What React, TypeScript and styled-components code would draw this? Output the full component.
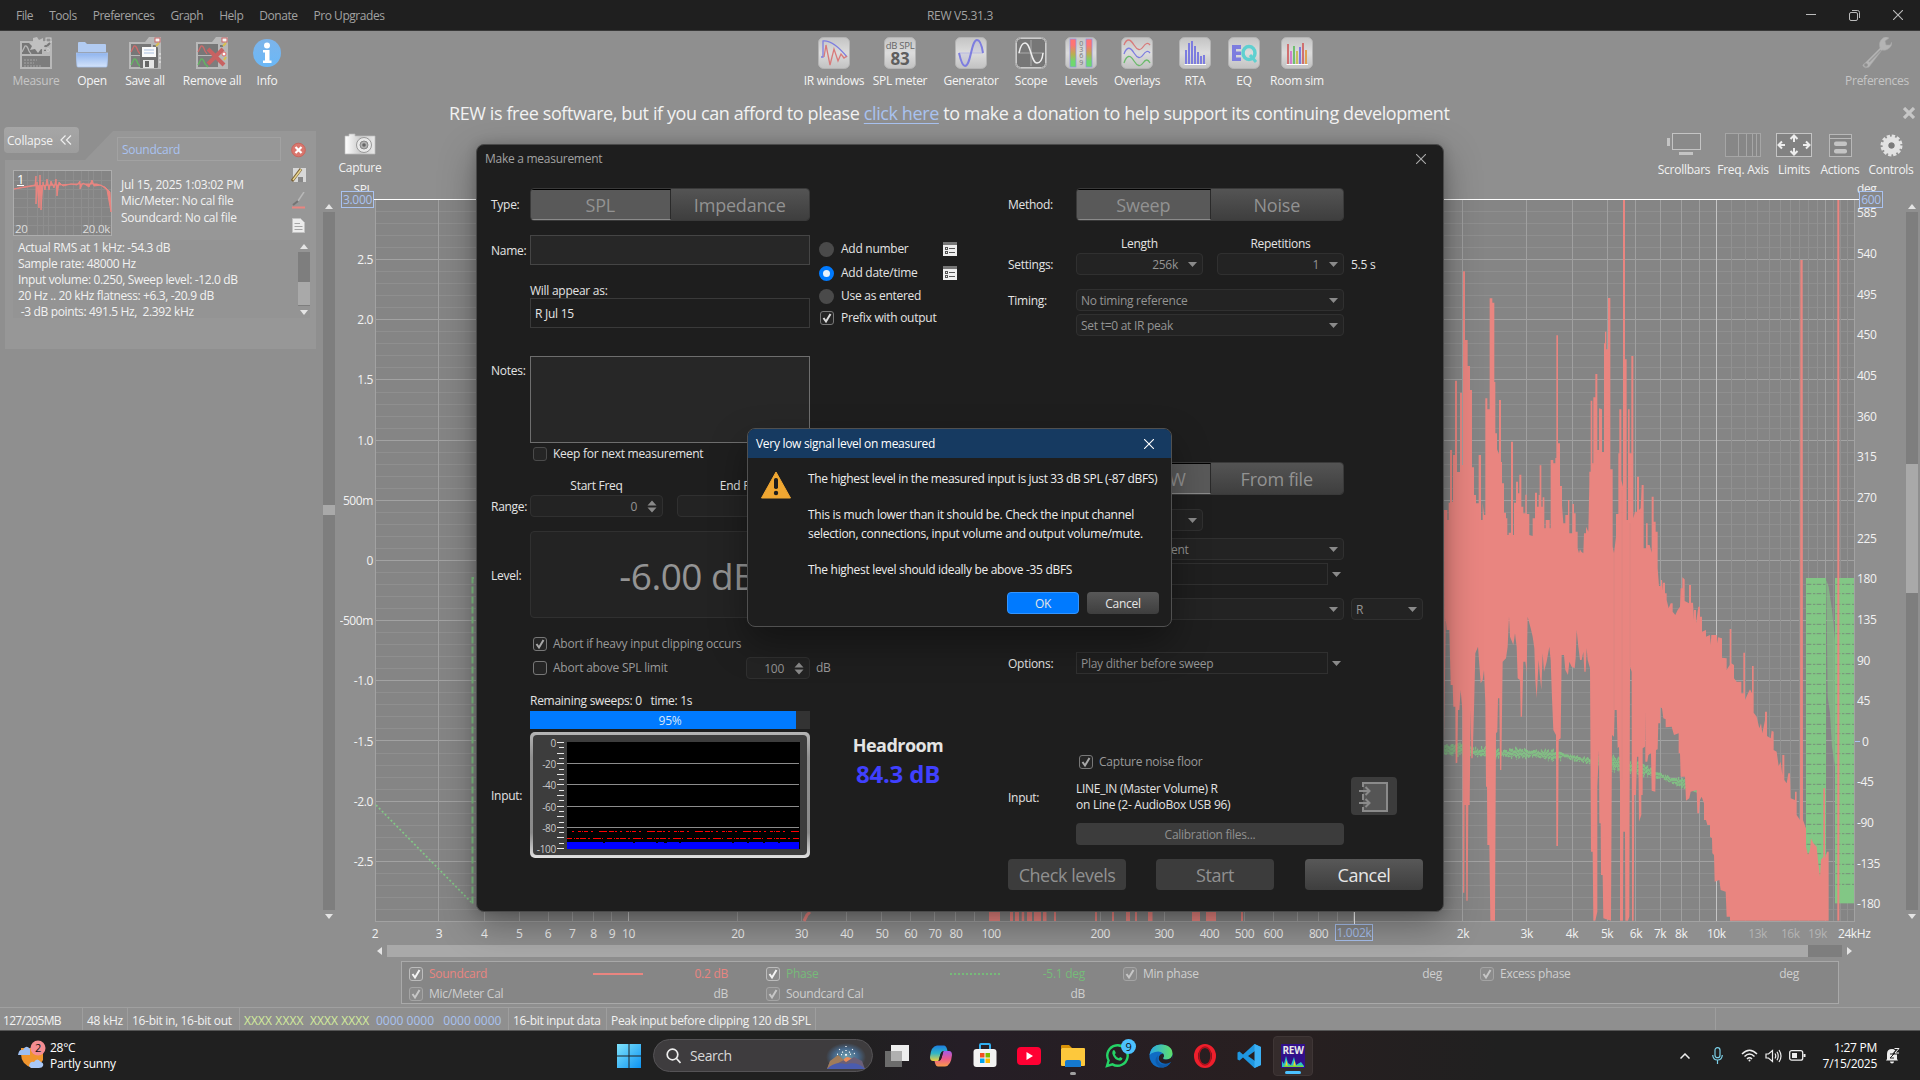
import React from "react";
import styled, { createGlobalStyle, css } from "styled-components";

const UI = `"Open Sans", "Noto Sans", sans-serif`;
const RED = "#e98580";
const GREEN = "#82c785";

const Global = createGlobalStyle`
  * { box-sizing: border-box; }
  html, body { margin: 0; padding: 0; background: #8f8f8f; overflow: hidden; }
  body { font-family: ${UI}; font-size: 12px; letter-spacing: -0.27px; color: #f2f2f2; line-height: 16px; }
  svg { display: block; flex: none; }
  svg text { font-family: ${UI}; }
`;

const Screen = styled.div`
  position: relative;
  width: 1920px;
  height: 1080px;
  display: flex;
  flex-direction: column;
  overflow: hidden;
`;

/* ---------- title bar ---------- */

const TitleBar = styled.header`
  height: 31px;
  flex: none;
  display: grid;
  grid-template-columns: 1fr auto 1fr;
  align-items: center;
  background: #1f1f1f;
  border-bottom: 1px solid #383838;
  color: #a2a2a2;
`;

const Menu = styled.nav`
  display: flex;
  gap: 16px;
  padding: 2px 0 0 16px;
  letter-spacing: -0.46px;
`;

const WindowTitle = styled.span`
  padding-top: 2px;
`;

const WindowButtons = styled.div`
  display: flex;
  justify-content: flex-end;
  align-items: center;
  gap: 33px;
  padding-right: 17px;
`;

/* ---------- toolbar ---------- */

const Toolbar = styled.div`
  height: 66px;
  flex: none;
  display: flex;
  padding-left: 6px;
`;

const Tool = styled.div<{ $w: number; $dim?: boolean }>`
  width: ${(p) => p.$w}px;
  padding-top: 6px;
  display: flex;
  flex-direction: column;
  align-items: center;
  gap: 4px;
  white-space: nowrap;
  color: ${(p) => (p.$dim ? "#c6c6c6" : "#f4f4f4")};
`;

const Spacer = styled.div<{ $w?: number }>`
  ${(p) => (p.$w ? `width: ${p.$w}px; flex: none;` : "flex: 1;")}
`;

const Banner = styled.div`
  height: 30px;
  flex: none;
  display: flex;
  align-items: center;
  padding: 1px 5px 0 449px;
  justify-content: space-between;
  font-size: 18px;
  letter-spacing: -0.4px;
  white-space: nowrap;
  line-height: 24px;
`;

const Link = styled.span`
  color: #a9c2f0;
  text-decoration: underline;
  text-underline-offset: 3px;
`;

/* ---------- main work area ---------- */

const Work = styled.main`
  flex: none;
  height: 880px;
  display: flex;
`;

const Side = styled.aside`
  width: 317px;
  flex: none;
`;

const SideCard = styled.section`
  width: 311px;
  height: 218px;
  margin: 4px 0 0 5px;
  display: flex;
  flex-direction: column;
  background: #979797;
  clip-path: polygon(0 29px, 80px 29px, 108px 0, 311px 0, 311px 218px, 0 218px);
`;

const Collapse = styled.button`
  position: absolute;
  left: 4px;
  top: 127px;
  width: 75px;
  height: 26px;
  padding: 0 7px 0 3px;
  display: flex;
  align-items: center;
  justify-content: space-between;
  border: 0;
  border-radius: 4px;
  background: linear-gradient(#a6a6a6, #9d9d9d);
  color: #f2f2f2;
  font: 12px ${UI};
  letter-spacing: -0.2px;
`;

const CardTop = styled.div`
  display: flex;
  padding: 6px 0 0 8px;
  height: 107px;
`;

const ThumbCol = styled.div`
  padding-top: 33px;
`;

const CardText = styled.div`
  width: 175px;
  padding-left: 5px;
`;

const NameBox = styled.div`
  height: 24px;
  width: 164px;
  padding: 4px 4px;
  border: 1px solid #a2a2a2;
  color: #a9c2f0;
  line-height: 15px;
`;

const Lines = styled.div<{ $pad?: string; $lh?: number; $ls?: number }>`
  padding: ${(p) => p.$pad || 0};
  line-height: ${(p) => p.$lh || 16}px;
  letter-spacing: ${(p) => p.$ls ?? -0.27}px;
  white-space: pre;
`;

const IconCol = styled.div`
  display: flex;
  flex-direction: column;
  align-items: center;
  gap: 8px;
  padding-top: 5px;
  width: 16px;
`;

const NotesBox = styled.div`
  width: 297px;
  height: 78px;
  margin: 2px 0 0 8px;
  display: flex;
  justify-content: space-between;
  background: #949494;
  overflow: hidden;
`;

/* ---------- scroll bars ---------- */

const VBar = styled.div<{ $h: number }>`
  width: 12px;
  height: ${(p) => p.$h}px;
  flex: none;
  display: flex;
  flex-direction: column;
  align-items: center;
`;

const ArrowCell = styled.div<{ $s: number }>`
  height: ${(p) => p.$s}px;
  display: flex;
  align-items: center;
`;

const Track = styled.div<{ $top: number }>`
  flex: 1;
  width: 12px;
  padding-top: ${(p) => p.$top}px;
  background: #7e7e7e;
`;

const Thumb = styled.div<{ $size: number }>`
  height: ${(p) => p.$size}px;
  background: #a9a9a9;
`;

const HBar = styled.div`
  display: flex;
  align-items: center;
  height: 12px;
  width: 1475px;
  margin-left: 37px;
  gap: 5px;
`;

const HTrack = styled.div`
  width: 1455px;
  height: 12px;
  background: #7e7e7e;
`;

const HThumb = styled.div`
  width: 1421px;
  height: 12px;
  background: #a9a9a9;
`;

/* ---------- graph ---------- */

const BarColumn = styled.div<{ $ml: number }>`
  padding-top: 73px;
  margin-left: ${(p) => p.$ml}px;
`;

const GraphArea = styled.section`
  width: 1560px;
  flex: none;
  margin-left: 5px;
  display: flex;
  flex-direction: column;
`;

const GraphTools = styled.div`
  height: 57px;
  display: flex;
  align-items: flex-start;
  padding: 5px 0 0 0;
  width: 1580px;
`;

const GraphTool = styled.div<{ $w: number; $mt?: number }>`
  width: ${(p) => p.$w}px;
  margin-top: ${(p) => p.$mt || 0}px;
  display: flex;
  flex-direction: column;
  align-items: center;
  gap: 5px;
  white-space: nowrap;
`;

const Legend = styled.div`
  width: 1438px;
  height: 43px;
  margin: 4px 0 0 61px;
  padding: 2px 7px;
  display: grid;
  grid-template-columns: repeat(4, 357px);
  grid-auto-rows: 20px;
  background: #868686;
  border: 1px solid #a9a9a9;
`;

const LegendItem = styled.div<{ $c?: string }>`
  display: grid;
  grid-template-columns: 20px 164px 50px 85px;
  align-items: center;
  color: ${(p) => p.$c || "#cfcfcf"};
`;

const LegendValue = styled.span`
  text-align: right;
`;

const Swatch = styled.span<{ $c: string; $style: string }>`
  border-top: 2px ${(p) => p.$style} ${(p) => p.$c};
`;

/* ---------- status bar ---------- */

const StatusBar = styled.footer`
  height: 24px;
  flex: none;
  display: flex;
  background: #8f8f8f;
  border-top: 1px solid #a0a0a0;
  border-bottom: 1px solid #555;
`;

const StatusCell = styled.div<{ $w: number; $pl?: number; $ls?: number }>`
  width: ${(p) => p.$w}px;
  padding: 3px 0 0 ${(p) => p.$pl ?? 4}px;
  border-right: 1px solid #9e9e9e;
  display: flex;
  align-items: center;
  white-space: pre;
  letter-spacing: ${(p) => p.$ls ?? -0.31}px;
`;

const Bits = styled.span<{ $c: string; $w: number; $ls: number }>`
  width: ${(p) => p.$w}px;
  color: ${(p) => p.$c};
  letter-spacing: ${(p) => p.$ls}px;
`;

/* ---------- measurement dialog ---------- */

const Dialog = styled.div`
  position: absolute;
  left: 476px;
  top: 144px;
  width: 968px;
  height: 768px;
  background: #1e1e1e;
  border: 1px solid #4a4a4a;
  border-radius: 8px;
  box-shadow: 0 12px 36px rgba(0, 0, 0, 0.34), 0 0 12px rgba(0, 0, 0, 0.16);
  display: flex;
  flex-direction: column;
  color: #e4e4e4;
`;

const DialogTitle = styled.div`
  height: 31px;
  display: flex;
  align-items: center;
  justify-content: space-between;
  padding: 0 17px 3px 8px;
  color: #a2a2a2;
`;

const DialogBody = styled.div`
  display: flex;
  padding-left: 14px;
`;

const LeftCol = styled.div`
  width: 517px;
`;

const RightCol = styled.div`
  width: 416px;
`;

const Row = styled.div<{ $h: number; $mt?: number; $pl?: number; $gap?: number; $top?: boolean }>`
  display: flex;
  align-items: ${(p) => (p.$top ? "flex-start" : "center")};
  height: ${(p) => p.$h}px;
  margin-top: ${(p) => p.$mt || 0}px;
  padding-left: ${(p) => p.$pl || 0}px;
  gap: ${(p) => p.$gap || 0}px;
  white-space: nowrap;
`;

const Label = styled.span<{ $w: number; $pt?: number }>`
  width: ${(p) => p.$w}px;
  flex: none;
  padding-top: ${(p) => p.$pt ?? 2}px;
`;

const Centered = styled.span<{ $w: number; $ml?: number }>`
  width: ${(p) => p.$w}px;
  margin-left: ${(p) => p.$ml || 0}px;
  text-align: center;
`;

const Segments = styled.div<{ $w: number }>`
  width: ${(p) => p.$w}px;
  height: 33px;
  display: flex;
  border-radius: 4px;
  overflow: hidden;
  border: 1px solid #3a3a3a;
`;

const Segment = styled.div<{ $on?: boolean }>`
  flex: 1;
  display: flex;
  align-items: center;
  justify-content: center;
  padding-top: 1px;
  font-size: 18px;
  letter-spacing: -0.2px;
  color: #929292;
  background: ${(p) => (p.$on ? "#595959" : "linear-gradient(#545454, #3e3e3e)")};
  ${(p) =>
    p.$on &&
    css`
      border-top: 1px solid #000;
      border-right: 1px solid #2a2a2a;
      border-bottom: 1px solid #8a8a8a;
    `}
`;

const Field = styled.div<{
  $w: number;
  $h: number;
  $edge?: string;
  $bg?: string;
  $r?: number;
  $right?: boolean;
  $pl?: number;
  $c?: string;
}>`
  width: ${(p) => p.$w}px;
  height: ${(p) => p.$h}px;
  flex: none;
  display: flex;
  align-items: center;
  justify-content: ${(p) => (p.$right ? "flex-end" : "space-between")};
  gap: 10px;
  padding: 1px 5px 0 ${(p) => p.$pl ?? 4}px;
  background: ${(p) => p.$bg || "#232323"};
  border: 1px solid ${(p) => p.$edge || "#303030"};
  border-radius: ${(p) => p.$r ?? 4}px;
  color: ${(p) => p.$c || "#949494"};
`;

const BigLevel = styled.span`
  font-size: 37px;
  letter-spacing: -0.5px;
  padding-right: 9px;
  padding-top: 1px;
  line-height: 48px;
`;

const Check = styled.span<{ $dim?: boolean; $light?: boolean }>`
  width: 14px;
  height: 14px;
  flex: none;
  border: 1px solid ${(p) => (p.$light ? (p.$dim ? "#a4a4a4" : "#bcbcbc") : p.$dim ? "#4a4a4a" : "#777")};
  border-radius: 3px;
  background: ${(p) => (p.$light ? "#8b8b8b" : "#252525")};
`;

const Dim = styled.span`
  color: #9a9a9a;
  letter-spacing: -0.22px;
`;

const Radio = styled.span<{ $on?: boolean }>`
  width: 15px;
  height: 15px;
  border-radius: 50%;
  border: ${(p) => (p.$on ? "4.5px solid #007aff" : "0")};
  background: ${(p) => (p.$on ? "#e8f1fc" : "#4a4a4a")};
`;

const NameArea = styled.div`
  display: flex;
  height: 93px;
  margin-top: 14px;
`;

const OptionList = styled.div`
  padding: 2px 0 0 9px;
`;

const OptionText = styled.span<{ $w: number }>`
  width: ${(p) => p.$w}px;
`;

const Progress = styled.div`
  width: 280px;
  height: 18px;
  margin: 1px 0 0 39px;
  display: flex;
  align-items: center;
  justify-content: center;
  padding-top: 1px;
  color: #d7e7fb;
  background: linear-gradient(to right, #007aff 266px, #333 266px);
`;

const MeterRow = styled.div`
  display: flex;
  margin-top: 3px;
`;

const MeterFrame = styled.div`
  width: 280px;
  height: 126px;
  padding: 3px;
  border-radius: 5px;
  background: linear-gradient(#b5b5b5, #8f8f8f 20%, #8a8a8a 80%, #e2e2e2);
`;

const MeterInner = styled.div`
  height: 120px;
  border-radius: 4px;
  overflow: hidden;
  background: #3d3d3d;
`;

const Headroom = styled.div`
  width: 176px;
  padding-top: 1px;
  text-align: center;
  font-weight: 700;
  font-size: 18px;
  line-height: 24px;
  letter-spacing: -0.55px;
`;

const HeadroomValue = styled.div`
  font-size: 24px;
  line-height: 34px;
  letter-spacing: -0.2px;
  color: #4040ff;
`;

const Button = styled.button<{ $w: number; $h: number; $kind?: "off" | "primary"; $big?: boolean }>`
  width: ${(p) => p.$w}px;
  height: ${(p) => p.$h}px;
  flex: none;
  padding: 1px 0 0;
  display: flex;
  align-items: center;
  justify-content: center;
  border: ${(p) => (p.$kind === "primary" ? "1px solid #3395ff" : "0")};
  border-radius: 4px;
  font: ${(p) => (p.$big ? 18 : 12)}px ${UI};
  letter-spacing: ${(p) => (p.$big ? -0.45 : -0.27)}px;
  color: ${(p) => (p.$kind === "off" ? "#909090" : "#e6e6e6")};
  background: ${(p) =>
    p.$kind === "primary" ? "#007aff" : p.$kind === "off" ? "#3c3c3c" : "linear-gradient(#585858, #3e3e3e)"};
`;

/* ---------- warning popup ---------- */

const Popup = styled.div`
  position: absolute;
  left: 747px;
  top: 428px;
  width: 425px;
  height: 199px;
  display: flex;
  flex-direction: column;
  background: #1e1e1e;
  border: 1px solid #505050;
  border-radius: 8px;
  overflow: hidden;
  box-shadow: 0 16px 36px rgba(0, 0, 0, 0.36);
  color: #eeeeee;
`;

const PopupTitle = styled.div`
  height: 29px;
  display: flex;
  align-items: center;
  justify-content: space-between;
  padding: 0 17px 0 8px;
  letter-spacing: -0.3px;
  background: #163a61;
  color: #fff;
`;

const PopupBody = styled.div`
  display: flex;
  gap: 17px;
  height: 134px;
  padding: 13px 0 0 13px;
`;

const Message = styled.div`
  margin-top: -2px;
  white-space: pre;
  line-height: 19px;
`;

const Para = styled.p<{ $ls?: number }>`
  margin: 0 0 17px;
  letter-spacing: ${(p) => p.$ls ?? -0.27}px;
`;

const PopupActions = styled.div`
  display: flex;
  justify-content: flex-end;
  gap: 8px;
  padding-right: 12px;
`;

/* ---------- taskbar ---------- */

const Taskbar = styled.div`
  height: 49px;
  flex: none;
  display: flex;
  align-items: center;
  background: linear-gradient(to right, #202020 0 44%, #251e26 50%, #281f20 66%, #202020 78%);
  font-size: 12px;
  color: #fff;
`;

const Weather = styled.div`
  width: 607px;
  display: flex;
  gap: 3px;
  padding-left: 17px;
`;

const SearchBox = styled.div`
  width: 220px;
  height: 33px;
  margin: 0 2px;
  display: flex;
  align-items: center;
  gap: 9px;
  padding: 0 6px 0 12px;
  border-radius: 17px;
  background: #3e3c3e;
  border: 1px solid #555356;
  font-size: 14px;
  letter-spacing: -0.45px;
  color: #d8d8d8;
`;

const Stretch = styled.span`
  flex: 1;
`;

const App24 = styled.div<{ $active?: boolean }>`
  position: relative;
  width: 40px;
  height: 40px;
  margin: 0 2px;
  display: flex;
  align-items: center;
  justify-content: center;
  border-radius: 4px;
  ${(p) => p.$active && "background: #352c2c; border: 1px solid #3f3636;"}
`;

const AppRow = styled.div`
  display: flex;
`;

const Badge = styled.span`
  position: absolute;
  right: 1px;
  top: 3px;
  width: 15px;
  height: 15px;
  border-radius: 50%;
  background: #4cc2ff;
  color: #111;
  font-size: 11px;
  line-height: 15px;
  text-align: center;
`;

const Underline = styled.span<{ $w: number; $c: string }>`
  position: absolute;
  bottom: 1px;
  width: ${(p) => p.$w}px;
  height: 3px;
  border-radius: 2px;
  background: ${(p) => p.$c};
`;

const Tray = styled.div`
  margin-left: auto;
  display: flex;
  align-items: center;
  padding-right: 19px;
`;

const Clock = styled.div`
  width: 65px;
  margin: 0 8px 0 6px;
  text-align: right;
`;

/* ---------- small shared pieces ---------- */

const Tri = ({ d, c = "#8a8a8a", w = 9 }: { d: "u" | "d" | "l" | "r"; c?: string; w?: number }) => {
  const h = Math.round(w * 0.6);
  const vertical = d === "u" || d === "d";
  const pts =
    d === "u" ? `0,${h} ${w / 2},0 ${w},${h}` : d === "d" ? `0,0 ${w},0 ${w / 2},${h}` : d === "l" ? `${h},0 ${h},${w} 0,${w / 2}` : `0,0 ${h},${w / 2} 0,${w}`;
  return (
    <svg width={vertical ? w : h} height={vertical ? h : w}>
      <polygon points={pts} fill={c} />
    </svg>
  );
};

const SpinArrows = () => (
  <svg width="10" height="13">
    <path d="M0.5 5.5L5 0.5L9.5 5.5ZM0.5 7.5L5 12.5L9.5 7.5Z" fill="#8a8a8a" />
  </svg>
);

const CheckBox = ({ on = true, dim, light, mark = "#dcdcdc" }: { on?: boolean; dim?: boolean; light?: boolean; mark?: string }) => (
  <Check $dim={dim} $light={light}>
    {on && (
      <svg width="12" height="12" fill="none" stroke={mark} strokeWidth="2">
        <path d="M2.5 6L5 9.5L9.5 2" />
      </svg>
    )}
  </Check>
);

const Cross = ({ c = "#bbb", w = 1.1 }: { c?: string; w?: number }) => (
  <svg width="10" height="10" stroke={c} strokeWidth={w}>
    <path d="M0 0L10 10M10 0L0 10" />
  </svg>
);

const Scroll = ({ h, top, size, s = 12 }: { h: number; top: number; size: number; s?: number }) => (
  <VBar $h={h}>
    <ArrowCell $s={s}>
      <Tri d="u" c="#e4e4e4" w={8} />
    </ArrowCell>
    <Track $top={top}>
      <Thumb $size={size} />
    </Track>
    <ArrowCell $s={s}>
      <Tri d="d" c="#e4e4e4" w={8} />
    </ArrowCell>
  </VBar>
);

/* ---------- toolbar icons ---------- */

const Tile = ({ children, bg = "url(#tile)" }: { children: React.ReactNode; bg?: string }) => (
  <svg width="32" height="32">
    <defs>
      <linearGradient id="tile" x2="0" y2="1">
        <stop offset="0" stopColor="#c4c4c4" />
        <stop offset="0.5" stopColor="#dcdcdc" />
        <stop offset="1" stopColor="#c2c2c2" />
      </linearGradient>
    </defs>
    <rect x="0.5" y="0.5" width="31" height="31" rx="5" fill={bg} stroke="#b4b4b4" />
    {children}
  </svg>
);

const MeasurementSheet = ({ kind }: { kind: "new" | "save" | "remove" }) => {
  const faded = kind === "new";
  return (
    <svg width="32" height="32">
      <path d={faded ? "M0 4H32V32H0Z" : "M0 5H16L20 0H32V32H0Z"} fill="#b8b8b8" />
      <rect x="2" y={faded ? 6 : 7} width="20" height="11" fill="#777" />
      <rect x="2" y="19" width={faded ? 28 : 20} height="11" fill="#7d7d7d" />
      <path d="M2 15L5 9Q7 8 9 14L11 17" fill="none" stroke={faded ? "#b8b8b8" : "#d06a6a"} strokeWidth="1.3" />
      {!faded && <path d="M2 28L5 22Q7 21 9 27L12 30" fill="none" stroke="#62b862" strokeWidth="1.3" />}
      <path d="M24 9H27M24 13H27" stroke="#666" strokeWidth="1.5" />
      <rect x="26" y="1" width="5" height="4" fill={faded ? "#909090" : "#f5f5f5"} stroke={faded ? "#d0d0d0" : "#c86464"} />
      <path d="M27 9L30 6" stroke={faded ? "#777" : "#d8c04e"} strokeWidth="2" />
      {faded && (
        <>
          <path d="M4 23H17M4 26H14M4 29H22" stroke="#a5a5a5" strokeDasharray="2 1" />
          <path d="M17 0L19 3L23 1L23 5L27 6L24 9L26 13L21 12L18 16L15 12L10 13L12 9L9 6L13 5L13 1Z" fill="#c0c0c0" />
          <circle cx="28" cy="13" r="1.5" fill="none" stroke="#ccc" />
        </>
      )}
      {kind === "save" && (
        <>
          <rect x="11" y="10" width="18" height="21" rx="1" fill="#707070" />
          <rect x="13" y="10" width="14" height="10" fill="#fafafa" />
          <path d="M15 13H25M15 16H25" stroke="#a9bfe0" />
          <rect x="14" y="23" width="11" height="8" fill="#e5e5e5" />
          <rect x="16" y="24" width="4" height="6" fill="#666" />
          <path d="M30 17H32M30 21H32M30 25H32" stroke="#eee" />
        </>
      )}
      {kind === "remove" && (
        <>
          <circle cx="28" cy="17" r="2" fill="#fff" stroke="#d66" />
          <path d="M28 23L30 20" stroke="#d8c04e" strokeWidth="2" />
          <path d="M12 12L28 28M27 12L12 27" stroke="#c86262" strokeWidth="4" />
        </>
      )}
    </svg>
  );
};

const FolderIcon = () => (
  <svg width="32" height="32">
    <defs>
      <linearGradient id="fold" x2="0" y2="1">
        <stop offset="0" stopColor="#8fb4ee" />
        <stop offset="1" stopColor="#d3e3fb" />
      </linearGradient>
    </defs>
    <path d="M2 15V6Q2 5 3 5H9L11 7H29Q30 7 30 8V15Z" fill="#b2cbf1" />
    <path d="M0 16H32L31 29Q31 30 30 30H2Q1 30 1 29Z" fill="url(#fold)" stroke="#a9c4ef" strokeWidth="0.8" />
  </svg>
);

const InfoIcon = () => (
  <svg width="32" height="32">
    <defs>
      <linearGradient id="inf" x2="0" y2="1">
        <stop offset="0" stopColor="#7db4ea" />
        <stop offset="1" stopColor="#6ab8f8" />
      </linearGradient>
    </defs>
    <circle cx="16" cy="16" r="14" fill="url(#inf)" />
    <circle cx="16" cy="8.5" r="3" fill="#fff" />
    <path d="M12 13H18.500V23.500H20.500V26H12V23.500H14V15.500H12Z" fill="#fff" />
  </svg>
);

const WrenchIcon = () => (
  <svg width="30" height="32">
    <path d="M3 26L18 11Q16 5 21 1Q24 -1 27 1L23 4L24 8L28 8L30 5Q30 10 26 12Q23 14 20 13L7 30Q3 32 1 29Q0 28 3 26Z" fill="#b4b4b4" stroke="#a6a6a6" strokeWidth="0.6" />
    <path d="M7 25L19 13" stroke="#9a9a9a" strokeWidth="1.4" />
    <circle cx="4" cy="28" r="1.8" fill="#8f8f8f" />
  </svg>
);

const BarsIcon = ({ data, w }: { data: [number, number, string][]; w: number }) => (
  <Tile>
    <path d="M5.500 27.500H27" stroke="#fff" />
    {data.map(([x, y, c]) => (
      <rect key={x} x={x} y={y} width={w} height={27 - y} fill={c} />
    ))}
  </Tile>
);

const B = "#7d7ddf";

/* ---------- graph ---------- */

const upper =
  "132,90 142,90 142,120 146,120 146,68 150,68 150,-90 156,-90 156,65 159,65 159,-75 165,-75 165,-298 171,-298 171,-24 180,-24 180,-262 186,-262 186,-45 189,-45 189,-626 195,-626 195,-420 203,-420 203,-342 210,-342 210,-270 216,-270 216,-38 222,-38 222,45 228,45 228,70 236,70 236,-75 243,-75 243,120 248,120 248,68 252,105 256,105 256,-245 262,-245 262,-212 269,-212 269,-545 277,-545 277,-532 283,-532 283,-294 286,-294 286,-140 291,-140 291,-92 297,-78 297,-240 303,-240 303,-54 306,-54 306,10 312,10 312,98 318,98 318,115 322,115 322,165 326,165 326,158 333,158 333,-115 339,-115 339,165 342,165 342,68 348,68 348,5 354,5 354,40 358,40 358,-16 364,-16 364,80 370,80 370,100 376,100 376,44 380,44 380,102 388,102 388,165 398,168 398,115 405,115 405,38 411,38 411,80 416,80 416,45 419,45 419,-44 424,-44 424,80 428,80 428,52 433,52 433,145 437,145 437,120 449,120 449,145 452,145 452,-60 460,-60 460,-50 466,-50 466,-66 469,-66 469,-434 474,-434 474,-110 480,-110 480,18 486,18 486,75 490,130 496,130 496,105 504,105 504,60 508,60 508,160 517,160 517,72 522,72 522,100 527,100 527,155 533,155 533,205 537,220 540,208 544,215 550,220 552,160 558,160 558,140 565,155 568,10 568,-25 572,-25 572,-238 577,-238 577,-50 580,-50 580,-248 586,-248 586,-318 592,-318 592,-90 597,-90 597,-215 606,-212 606,-84 612,-84 612,-410 615,-410 615,-445 619,-445 619,-392 624,-392 624,-546 631,-546 631,-32 638,-32 638,200 642,220 648,170 648,102 655,102 655,-80 658,-80 658,-212 664,-212 664,0 669,20 669,-840 675,-840 675,-362 680,-362 680,120 684,120 684,-212 689,-212 689,-80 694,-80 694,-372 700,-372 700,115 705,95 711,95 711,-10 717,-10 717,90 722,85 725,15 731,15 731,205 738,205 738,130 743,130 743,195 749,195 755,218 755,50 761,50 761,125 767,125 767,155 773,155 773,265 777,318 783,318 783,300 786,300 789,332 789,308 795,308 795,340 800,340 800,360 806,385 812,370 818,370 818,395 826,405 833,390 840,380 842,325 847,325 847,292 854,298 854,363 867,370 867,315 873,315 873,368 879,368 882,420 882,390 888,390 888,430 895,380 900,380 900,410 906,410 906,455 918,450 918,470 930,465 932,495 934,465 950,465 952,490 954,472 966,475 966,533 980,535 980,570 989,555 989,447 994,447 994,550 1002,555 1002,595 1010,605 1024,605 1024,640 1030,640 1030,518 1035,518 1035,660 1044,640 1050,628 1056,640 1056,558 1061,558 1061,698 1070,710 1078,745 1083,730 1087,760 1095,720 1095,695 1101,695 1101,768 1112,775 1115,752 1121,755 1121,810 1130,815 1136,858 1142,845 1147,885 1147,825 1153,825 1153,900 1160,910 1165,880 1170,880 1172,955 1185,960 1185,935 1190,935 1190,1005 1200,1020 1201,-660 1208,-660 1209,1020 1218,1045 1218,1100 1224,1125 1230,1110 1233,1075 1240,1090 1250,1100 1255,1150 1260,1190 1263,1140 1270,1130 1270,925 1275,925 1275,1135 1281,1115 1286,1115 1286,1322";
const lower =
  "990,1322 990,1310 980,1310 977,1235 962,1230 958,1200 944,1205 942,1125 937,1120 936,1075 930,1070 930,1035 922,1035 918,1020 912,1020 912,970 905,950 900,960 897,1000 892,1000 890,930 872,935 868,955 858,962 855,890 842,890 840,820 836,820 836,760 822,765 815,740 797,742 797,718 790,715 786,685 781,682 781,730 775,730 773,808 768,810 766,935 755,932 753,820 745,825 742,845 736,845 736,690 735,800 728,805 728,945 724,945 724,1005 717,1025 715,830 711,830 708,945 703,945 701,1322 696,1322 695,575 690,560 688,1310 684,1322 676,1322 675,1055 670,1055 669,1322 660,1322 660,910 657,800 653,805 650,690 644,690 642,770 636,765 633,1322 610,1315 608,1185 603,1185 602,1030 598,1030 597,810 592,920 592,1295 586,1322 580,1322 578,1115 573,1115 572,920 570,565 563,540 560,505 557,575 553,575 550,515 545,540 540,540 535,500 530,450 527,535 524,565 515,560 508,545 504,585 496,570 492,525 485,525 482,775 476,780 474,1098 469,1098 468,765 460,750 456,655 452,540 448,500 440,545 432,575 428,520 424,630 420,590 416,540 410,655 406,600 403,505 398,470 392,445 383,410 380,575 376,545 370,545 366,710 362,710 360,600 353,595 350,500 345,460 340,495 334,480 330,470 327,410 323,500 318,535 308,545 305,780 304,870 300,870 298,655 294,655 292,755 288,760 285,1322 271,1322 268,1095 262,1095 261,920 258,920 256,670 252,570 248,600 242,610 238,555 234,500 226,520 222,690 218,835 214,835 212,690 209,975 205,975 203,1262 199,1262 197,975 194,975 193,1238 189,1238 187,690 182,630 178,690 174,690 172,848 167,850 166,680 160,680 158,615 152,615 148,450 140,450 137,415 133,780";

const freqX = (f: number) => 628.5 + 362.6 * (Math.log10(f) - 1);
const freqLines = [1, 10, 100, 1000].flatMap((d) => [2, 3, 4, 5, 6, 7, 8, 9, 10].map((n) => n * d));
const freqLabels: [number, string][] = [
  [2, "2"], [3, "3"], [4, "4"], [5, "5"], [6, "6"], [7, "7"], [8, "8"], [9, "9"], [10, "10"],
  [20, "20"], [30, "30"], [40, "40"], [50, "50"], [60, "60"], [70, "70"], [80, "80"], [100, "100"],
  [200, "200"], [300, "300"], [400, "400"], [500, "500"], [600, "600"], [800, "800"],
  [2000, "2k"], [3000, "3k"], [4000, "4k"], [5000, "5k"], [6000, "6k"], [7000, "7k"], [8000, "8k"],
  [10000, "10k"], [13000, "13k"], [16000, "16k"], [19000, "19k"], [24000, "24kHz"],
];
const levelLabels = ["2.5", "2.0", "1.5", "1.0", "500m", "0", "-500m", "-1.0", "-1.5", "-2.0", "-2.5"];
const phaseLabels = Array.from({ length: 18 }, (_, i) => 585 - 45 * i);

/* band of wrapped phase points following the mid line of the trace */
const phaseMid: [number, number, number][] = [
  [132, 810, 18], [190, 808, 22], [215, 815, 14], [290, 820, 20], [305, 820, 10], [350, 820, 18], [400, 822, 14], [470, 826, 20], [490, 828, 10], [520, 833, 9], [570, 842, 10], [640, 850, 24], [740, 872, 22], [760, 880, 11], [800, 896, 8], [850, 910, 16], [905, 935, 10],
];
const phaseDots = (() => {
  let out = "";
  let seed = 7;
  for (let i = 0; i < phaseMid.length - 1; i++) {
    const [x0, y0, a0] = phaseMid[i];
    const [x1, y1, a1] = phaseMid[i + 1];
    for (let x = x0; x < x1; x += 3) {
      seed = (seed * 73 + 41) % 997;
      const t = (x - x0) / (x1 - x0);
      const amp = (a0 + (a1 - a0) * t) * (0.45 + (seed % 11) / 18);
      const y = y0 + (y1 - y0) * t + (seed % 7) - 3;
      out += `M${x} ${(y - amp).toFixed(0)}V${(y + amp).toFixed(0)}`;
    }
  }
  return out;
})();

const bottomBits = [
  [989, 11], [1010, 3], [1015, 4], [1021.7, 2.5], [1027, 5], [1034, 7], [1043, 3.5], [1054, 2], [1095, 2], [1112, 2],
  [1126, 4], [1135, 2], [1148, 4.5], [1192, 8], [1206, 10], [1241, 2],
];

const Plot = () => (
  <svg width="1560" height="761" viewBox="340 184 1560 761">
    <rect x="375.500" y="199.500" width="1479" height="722" fill="#858585" />
    {Array.from({ length: 60 }, (_, i) => (
      <path key={i} d={`M376 ${Math.round(199 + i * 12.033) + 0.5}H1854`} stroke={i % 5 ? "#8f8f8f" : "#a2a2a2"} />
    ))}
    {freqLines.map((f) => (
      <path key={f} d={`M${Math.floor(freqX(f)) + 0.5} 200V921`} stroke={f === 10 || f === 100 || f === 10000 ? "#c4c4c4" : "#a0a0a0"} />
    ))}
    {Array.from({ length: 13 }, (_, i) => 11000 + i * 1000).map((f) => (
      <path key={f} d={`M${Math.floor(freqX(f)) + 0.5} 200V921`} stroke={f === 20000 ? "#a0a0a0" : "#919191"} />
    ))}
    <rect x="375.500" y="199.500" width="1479" height="722" fill="none" stroke="#a2a2a2" />
    <g stroke={GREEN} fill="none">
      <path d="M376 805L425 855L471 902" strokeWidth="1.7" strokeDasharray="2 2.200" />
      <path d="M474 578H472.500V904" strokeWidth="2" strokeDasharray="7 3" />
    </g>
    <g transform="translate(1400 480) scale(0.33333)">
      <path d={phaseDots} stroke={GREEN} strokeWidth="3" strokeDasharray="9 2" />
      <rect x="1218" y="294" width="60" height="900" fill={GREEN} />
      <rect x="1305" y="294" width="57" height="976" fill={GREEN} />
      <path d="M1279 300L1286 320L1296 390L1305 480V860L1296 800L1290 700L1283 650Z" fill={GREEN} opacity="0.65" />
      {Array.from({ length: 31 }, (_, i) => 313 + Math.floor(i / 2) * 60 + (i % 2) * 28).map((y) => (
        <path key={y} d={`M1220 ${y}H1277M1307 ${y}H1362`} stroke="#77907a" strokeWidth="3" strokeDasharray="14 5 7 4" />
      ))}
      <polygon points={`${upper} ${lower}`} fill={RED} />
      <path d="M642 215V690M690 130V560M666 30V900" stroke="#c98884" strokeWidth="1" />
      <rect x="1312" y="-840" width="6" height="2162" fill={RED} />
    </g>
    {bottomBits.map(([x, w]) => (
      <rect key={x} x={x} y="912" width={w} height="9" fill={RED} />
    ))}
    <path d="M804 921L807 915L810 912" stroke={RED} strokeWidth="3" />
    <path d="M1354.500 905V925" stroke="#fff" />
    <path d="M374 199.500H1859" stroke="#fff" />
    <path d="M1855 741.500H1860" stroke="#a9c2f0" />
    <g fontSize="12" fill="#f2f2f2" letterSpacing="-0.4">
      <text x="363" y="194" textAnchor="middle">SPL</text>
      <text x="1857" y="193">deg</text>
      {levelLabels.map((t, i) => (
        <text key={t} x="373" y={264 + i * 60.2} textAnchor="end">{t}</text>
      ))}
      {phaseLabels.map((v) => (
        <text key={v} x={v === 0 ? 1862 : 1857} y={(745.8 - v * 0.9033).toFixed(1)}>{v}</text>
      ))}
      {freqLabels.map(([f, t]) => (
        <text key={f} x={freqX(f).toFixed(1)} y="938" textAnchor="middle" fill={["13k", "16k", "19k"].includes(t) ? "#b4b4b4" : "#f2f2f2"}>
          {t}
        </text>
      ))}
    </g>
    <g fill="#878787" stroke="#a9c2f0">
      <rect x="341.500" y="191.500" width="32" height="16" />
      <rect x="1859.500" y="191.500" width="23" height="16" />
      <rect x="1335.500" y="924.500" width="37" height="16" />
    </g>
    <g fontSize="12" fill="#a9c2f0" letterSpacing="-0.3" textAnchor="middle">
      <text x="357.500" y="204">3.000</text>
      <text x="1871" y="204">600</text>
      <text x="1354" y="937">1.002k</text>
    </g>
  </svg>
);

const Thumbnail = () => (
  <svg width="99" height="66">
    <rect x="0.5" y="0.5" width="98" height="65" fill="#858585" stroke="#adadad" />
    {[10, 19, 28, 37, 46, 55].map((y) => (
      <path key={y} d={`M1 ${y}.500H98`} stroke="#8e8e8e" />
    ))}
    {[14, 24, 30, 35, 42, 52, 60, 68, 75, 80, 88].map((x) => (
      <path key={x} d={`M${x}.500 1V65`} stroke="#8e8e8e" />
    ))}
    <path
      d="M1 19L10 17L22 15L23 6V34L24 12L26 38L27 5L28 40L30 12L32 20L34 9L36 20L38 11L41 18L43 9L44 26L46 12L50 16L58 14L64 15L67 11V19L70 13L76 17L79 10L81 16L88 15L94 20L98 42L97 22L92 17L84 14L60 14L46 15L40 15L20 16Z"
      fill={RED}
      stroke={RED}
      strokeWidth="1"
    />
    <text x="4" y="14" fontSize="13" fill="#fff">1</text>
    <path d="M4 15.500H11" stroke="#fff" />
    <text x="2" y="62.500" fontSize="11.500" fill="#dedede">20</text>
    <text x="97" y="62.500" fontSize="11.500" fill="#dedede" textAnchor="end">20.0k</text>
  </svg>
);

const InputMeter = () => (
  <svg width="274" height="120" viewBox="3 3 274 120">
    <rect x="37" y="10" width="233" height="107" fill="#000" />
    {Array.from({ length: 21 }, (_, i) => (
      <path key={i} d={`M${i % 2 ? 29 : 27} ${Math.floor(10.5 + i * 5.3) + 0.5}H34`} stroke="#e6e6e6" />
    ))}
    {[31.5, 52.5, 74.5, 95.5].map((y) => (
      <path key={y} d={`M37 ${y}H269`} stroke="#8c8c8c" />
    ))}
    <path d="M42 99.500H269" stroke="#f00" strokeDasharray="2 4 3 1 1 1 4 3 2 6 8 2 5 1 2 3" />
    <path d="M37 106.500H269" stroke="#f00" strokeDasharray="5 2 1 1 3 1 6 2 2 3 8 1 1 4" />
    <rect x="37" y="110" width="232" height="7" fill="#00f" />
    <path d="M73 110H75M103 110H105M126 110H128M134 110H137M149 110H151M202 110H204M217 110H219M233 110H235M248 110H250" stroke="#000" strokeWidth="2" />
    <g fontSize="10" fill="#c8c8c8" textAnchor="end">
      {["0", "-20", "-40", "-60", "-80", "-100"].map((t, i) => (
        <text key={t} x="26" y={15 + i * 21.2}>{t}</text>
      ))}
    </g>
  </svg>
);

const ListIcon = () => (
  <svg width="14" height="14">
    <rect width="14" height="14" fill="#eee" />
    <rect width="14" height="3" fill="#777" />
    <rect x="2.500" y="5.500" width="2" height="2" fill="none" stroke="#555" />
    <rect x="2.500" y="9.500" width="2" height="2" fill="none" stroke="#555" />
    <path d="M6 6.500H12M6 10.500H12" stroke="#555" />
  </svg>
);

const Combo = ({ w, text = "", right, pl }: { w: number; text?: string; right?: boolean; pl?: number }) => (
  <Field $w={w} $h={22} $right={right} $pl={pl}>
    <span>{text}</span>
    <Tri d="d" />
  </Field>
);

/* ---------- app ---------- */

export default function App() {
  return (
    <Screen>
      <Global />
      <TitleBar>
        <Menu>
          {["File", "Tools", "Preferences", "Graph", "Help", "Donate", "Pro Upgrades"].map((m) => (
            <span key={m}>{m}</span>
          ))}
        </Menu>
        <WindowTitle>REW V5.31.3</WindowTitle>
        <WindowButtons>
          <svg width="10" height="10" stroke="#bbb"><path d="M0 4.500H10" /></svg>
          <svg width="11" height="11" fill="none" stroke="#bbb">
            <rect x="0.5" y="2.500" width="8" height="8" rx="1.500" />
            <path d="M3 0.500H8.500Q10.500 0.500 10.500 2.500V8" />
          </svg>
          <Cross />
        </WindowButtons>
      </TitleBar>

      <Toolbar>
        <Tool $w={60} $dim><MeasurementSheet kind="new" />Measure</Tool>
        <Tool $w={52}><FolderIcon />Open</Tool>
        <Tool $w={54}><MeasurementSheet kind="save" />Save all</Tool>
        <Tool $w={80}><MeasurementSheet kind="remove" />Remove all</Tool>
        <Tool $w={30}><InfoIcon />Info</Tool>
        <Spacer $w={518} />
        <Tool $w={68}>
          <Tile>
            <path d="M3 20H5V4Q15 3 29 20" fill="none" stroke={B} strokeWidth="1.300" />
            <path d="M6 20L8 8L12 28L16 12L20 24L23 17L26 21L29 19" fill="none" stroke="#d87a7a" strokeWidth="1.300" />
          </Tile>
          IR windows
        </Tool>
        <Tool $w={64}>
          <Tile>
            <text x="16" y="11.500" fontSize="9.500" textAnchor="middle" fill="#666">dB SPL</text>
            <text x="16" y="28" fontSize="17" fontWeight="700" textAnchor="middle" fill="#5e5e5e">83</text>
          </Tile>
          SPL meter
        </Tool>
        <Tool $w={78}>
          <Tile>
            <path d="M4 16H28" stroke="#b9b9e2" />
            <path d="M4 16Q7 29 10 29C16 29 16 3 22 3Q26 3 28 16" fill="#b9b9e244" stroke={B} strokeWidth="2" />
          </Tile>
          Generator
        </Tool>
        <Tool $w={42}>
          <Tile bg="#777">
            <path d="M16 3V29M3 16H29" stroke="#aaa" />
            <path d="M4 16Q6 6 10 6C16 6 16 26 22 26Q27 26 28 16" fill="none" stroke="#eee" strokeWidth="1.500" />
            <rect x="1.500" y="1.500" width="29" height="29" rx="4" fill="none" stroke="#ccc" />
          </Tile>
          Scope
        </Tool>
        <Tool $w={58}>
          <Tile>
            <defs>
              <linearGradient id="lv" x2="0" y2="1">
                <stop offset="0.2" stopColor="#ff7474" />
                <stop offset="0.550" stopColor="#b8b050" />
                <stop offset="0.8" stopColor="#6fd86f" />
              </linearGradient>
            </defs>
            <rect x="5" y="2" width="6" height="28" fill="url(#lv)" stroke="#9090e8" strokeWidth="0.700" />
            <rect x="21" y="2" width="6" height="28" fill="url(#lv)" stroke="#9090e8" strokeWidth="0.700" />
            <g fontSize="7" fill="#777" textAnchor="middle">
              <text x="16" y="8.500">0</text>
              <text x="16" y="14.800">3</text>
              <text x="16" y="21">6</text>
              <text x="16" y="27.500">9</text>
            </g>
          </Tile>
          Levels
        </Tool>
        <Tool $w={54}>
          <Tile>
            <g fill="none" strokeWidth="1.300">
              <path d="M3 8Q7 -2 13 8Q18 16 22 10T29 8" stroke="#d87a7a" />
              <path d="M3 17Q7 6 13 16Q18 24 22 18T29 16" stroke={B} />
              <path d="M3 26Q7 14 13 24Q18 32 22 26T29 26" stroke="#6cba6c" />
            </g>
          </Tile>
          Overlays
        </Tool>
        <Tool $w={62}>
          <BarsIcon w={2} data={[[6, 13, B], [9, 6, B], [12, 4, B], [15, 9, B], [18, 15, B], [21, 19, B], [24, 18, B]]} />
          RTA
        </Tool>
        <Tool $w={36}>
          <Tile>
            <path d="M4 8H13V12H8V14.500H13V18H8V20.500H13V24H4Z" fill={B} />
            <ellipse cx="21" cy="16" rx="6" ry="6.500" fill="none" stroke="#5fd0d0" strokeWidth="3.500" />
            <path d="M22 18L28 25" stroke="#5fd0d0" strokeWidth="3" />
          </Tile>
          EQ
        </Tool>
        <Tool $w={70}>
          <BarsIcon w={2} data={[[6, 7, "#d07070"], [9, 14, "#d080d0"], [12, 9, "#70c070"], [15, 14, "#c8c060"], [18, 10, B], [21, 6, "#d07070"], [24, 13, "#e0a050"]]} />
          Room sim
        </Tool>
        <Spacer />
        <Tool $w={86} $dim><WrenchIcon />Preferences</Tool>
      </Toolbar>

      <Banner>
        <span>
          REW is free software, but if you can afford to please <Link>click here</Link> to make a donation to help support its continuing development
        </span>
        <svg width="12" height="12" stroke="#c6c6c6" strokeWidth="3.200"><path d="M1 1L11 11M11 1L1 11" /></svg>
      </Banner>

      <Work>
        <Side>
          <SideCard>
            <CardTop>
              <ThumbCol><Thumbnail /></ThumbCol>
              <CardText>
                <NameBox>Soundcard</NameBox>
                <Lines $pad="16px 0 0 4px" $lh={16.3}>{"Jul 15, 2025 1:03:02 PM\nMic/Meter: No cal file\nSoundcard: No cal file"}</Lines>
              </CardText>
              <Spacer $w={3} />
              <IconCol>
                <svg width="15" height="17">
                  <circle cx="7.500" cy="8" r="6.800" fill="#d9776e" stroke="#c9655c" />
                  <path d="M4.500 5L10.500 11M10.500 5L4.500 11" stroke="#fff" strokeWidth="2.200" />
                </svg>
                <svg width="15" height="17">
                  <rect x="2" y="1" width="13" height="14" fill="#d8d8d8" />
                  <rect x="7" y="10" width="5" height="5" fill="#888" />
                  <path d="M1 14L10 2" stroke="#7a6238" strokeWidth="3" />
                  <path d="M2 13L10 2.500" stroke="#ead68e" strokeWidth="1.400" />
                </svg>
                <svg width="15" height="17">
                  <path d="M13 0L7 9" stroke="#b8b8b8" strokeWidth="1.500" />
                  <path d="M7 9L2 13" stroke="#747474" strokeWidth="2" />
                  <rect x="1" y="14.500" width="13" height="2" fill={RED} />
                </svg>
                <svg width="15" height="17">
                  <path d="M1.500 1.500H9.500L13.500 5.500V15.500H1.500Z" fill="#ececec" stroke="#c2c2c2" />
                  <path d="M3.500 6.500H9M3.500 9.500H11.500M3.500 12.500H11.500" stroke="#a5a5a5" />
                </svg>
              </IconCol>
            </CardTop>
            <NotesBox>
              <Lines $pad="0 0 0 5px" $lh={15.9} $ls={-0.36}>
                {"Actual RMS at 1 kHz: -54.3 dB\nSample rate: 48000 Hz\nInput volume: 0.250, Sweep level: -12.0 dB\n20 Hz .. 20 kHz flatness: +6.3, -20.9 dB\n -3 dB points: 491.5 Hz,  2.392 kHz"}
              </Lines>
              <Scroll h={78} top={30} size={23} />
            </NotesBox>
          </SideCard>
        </Side>

        <BarColumn $ml={6}><Scroll h={722} top={293} size={10} /></BarColumn>

        <GraphArea>
          <GraphTools>
            <GraphTool $w={40}>
              <svg width="32" height="23">
                <defs>
                  <linearGradient id="cam"><stop stopColor="#fff" /><stop offset="0.500" stopColor="#ccc" /><stop offset="1" stopColor="#e8e8e8" /></linearGradient>
                </defs>
                <path d="M1 4H5V2H11V4H31V22H1Z" fill="url(#cam)" stroke="#bbb" strokeWidth="0.700" />
                <circle cx="20" cy="13" r="7.500" fill="#e8e8e8" stroke="#999" />
                <circle cx="20" cy="13" r="4" fill="#b0b0b0" stroke="#888" />
                <circle cx="20" cy="13" r="1.800" fill="#666" />
              </svg>
              Capture
            </GraphTool>
            <Spacer $w={1276} />
            <GraphTool $w={56} $mt={1}>
              <svg width="34" height="24">
                <rect x="5.500" y="0.500" width="28" height="16" fill="#8a8a8a" stroke="#c4c4c4" />
                <rect x="0" y="5" width="3" height="8" fill="#c4c4c4" />
                <rect x="12" y="19" width="14" height="3" fill="#c4c4c4" />
              </svg>
              Scrollbars
            </GraphTool>
            <GraphTool $w={62} $mt={1}>
              <svg width="36" height="24" stroke="#a6a6a6" fill="none">
                <rect x="0.5" y="0.5" width="35" height="23" fill="#878787" />
                <path d="M13.500 0V24M21.500 0V24M27.500 0V24M31.500 0V24" />
              </svg>
              Freq. Axis
            </GraphTool>
            <GraphTool $w={40} $mt={1}>
              <svg width="36" height="24">
                <rect x="0.5" y="0.5" width="35" height="23" fill="#828282" stroke="#c4c4c4" />
                <path d="M9 12H3M6 8.500L2.500 12L6 15.500M27 12H33M30 8.500L33.500 12L30 15.500M18 9V3M14.500 6L18 2.500L21.500 6M18 15V21M14.500 18L18 21.500L21.500 18" stroke="#ededed" strokeWidth="2" fill="none" />
              </svg>
              Limits
            </GraphTool>
            <GraphTool $w={52} $mt={2}>
              <svg width="23" height="23">
                <rect x="0.5" y="0.5" width="22" height="22" fill="#848484" stroke="#b8b8b8" />
                <path d="M0 4.500H23" stroke="#b8b8b8" />
                <rect x="5" y="7.500" width="13" height="4.500" rx="2" fill="#c4c4c4" />
                <rect x="5" y="15" width="13" height="4.500" rx="2" fill="#c4c4c4" />
              </svg>
              Actions
            </GraphTool>
            <GraphTool $w={50} $mt={2}>
              <svg width="23" height="23">
                <circle cx="11.500" cy="11.500" r="9.500" fill="none" stroke="#e2e2e2" strokeWidth="3" strokeDasharray="3.200 1.770" />
                <circle cx="11.500" cy="11.500" r="6" fill="none" stroke="#e2e2e2" strokeWidth="6" />
                <circle cx="11.500" cy="11.500" r="3" fill="#7a7a7a" />
              </svg>
              Controls
            </GraphTool>
          </GraphTools>
          <Plot />
          <HBar>
            <Tri d="l" c="#e4e4e4" w={8} />
            <HTrack><HThumb /></HTrack>
            <Tri d="r" c="#e4e4e4" w={8} />
          </HBar>
          <Legend>
            <LegendItem $c={RED}>
              <CheckBox light mark="#f4f4f4" />Soundcard<Swatch $c={RED} $style="solid" /><LegendValue>0.2 dB</LegendValue>
            </LegendItem>
            <LegendItem $c="#76bb79">
              <CheckBox light mark="#f4f4f4" />Phase<Swatch $c="#76bb79" $style="dotted" /><LegendValue>-5.1 deg</LegendValue>
            </LegendItem>
            <LegendItem><CheckBox light dim mark="#c6c6c6" />Min phase<span /><LegendValue>deg</LegendValue></LegendItem>
            <LegendItem><CheckBox light dim mark="#c6c6c6" />Excess phase<span /><LegendValue>deg</LegendValue></LegendItem>
            <LegendItem><CheckBox light dim mark="#c6c6c6" />Mic/Meter Cal<span /><LegendValue>dB</LegendValue></LegendItem>
            <LegendItem><CheckBox light dim mark="#c6c6c6" />Soundcard Cal<span /><LegendValue>dB</LegendValue></LegendItem>
          </Legend>
        </GraphArea>

        <BarColumn $ml={6}><Scroll h={722} top={252} size={129} /></BarColumn>
      </Work>

      <StatusBar>
        <StatusCell $w={83} $pl={3} $ls={-0.7}>127/205MB</StatusCell>
        <StatusCell $w={45}>48 kHz</StatusCell>
        <StatusCell $w={112}>16-bit in, 16-bit out</StatusCell>
        <StatusCell $w={269}>
          <Bits $c="#d3eb9c" $w={132} $ls={0.1}>{"XXXX XXXX  XXXX XXXX"}</Bits>
          <Bits $c="#a9c2f0" $w={126} $ls={0}>{"0000 0000   0000 0000"}</Bits>
        </StatusCell>
        <StatusCell $w={98}>16-bit input data</StatusCell>
        <StatusCell $w={209}>Peak input before clipping 120 dB SPL</StatusCell>
        <StatusCell $w={900} />
      </StatusBar>

      <Taskbar>
        <Weather>
          <svg width="30" height="30">
            <path d="M4 8H26V20Q22 28 15 28Q4 24 4 14Z" fill="#f0952d" />
            <path d="M1 15Q2 9 6 10Q9 4 13 9V15Z" fill="#9dbff2" />
            <path d="M12 26Q13 21 17 22Q20 17 24 22Q27 23 26 26Q25 28 22 28H14Z" fill="#a9c8f7" />
            <circle cx="21" cy="8" r="7.500" fill="#f58d92" />
            <text x="21" y="12" fontSize="11" textAnchor="middle" fill="#111">2</text>
          </svg>
          <Lines $lh={16}>{"28°C\nPartly sunny"}</Lines>
        </Weather>
        <App24>
          <svg width="24" height="24">
            <defs><linearGradient id="win" x2="1" y2="1"><stop stopColor="#7fe3fb" /><stop offset="1" stopColor="#0d93f2" /></linearGradient></defs>
            <path d="M0 0H11.500V11.500H0ZM12.500 0H24V11.500H12.500ZM0 12.500H11.500V24H0ZM12.500 12.500H24V24H12.500Z" fill="url(#win)" />
          </svg>
        </App24>
        <SearchBox>
          <svg width="15" height="16" fill="none" stroke="#eee" strokeWidth="1.700"><circle cx="6.500" cy="6.500" r="5.300" /><path d="M10.500 10.500L14.500 15" /></svg>
          <Stretch>Search</Stretch>
          <svg width="40" height="26">
            <defs>
              <radialGradient id="sky">
                <stop stopColor="#6fa0b0" />
                <stop offset="0.600" stopColor="#47688a" />
                <stop offset="1" stopColor="#3e3c3e" />
              </radialGradient>
            </defs>
            <ellipse cx="20" cy="14" rx="20" ry="14" fill="url(#sky)" />
            <path d="M16 20Q20 8 30 20Z" fill="#e88c5a" />
            <path d="M1 26L4 18L12 13L20 19L28 14L36 18L39 26Z" fill="#6a5f78" />
            <path d="M1 26L4 18L12 12L18 17L14 19Z" fill="#a07c5a" />
            <path d="M1 26Q8 18 20 21Q32 18 39 26Z" fill="#4a5cae" />
            <path d="M20 12V3M20 12L13 6M20 12L27 6M20 12L31 10M20 12L9 11" stroke="#fff" strokeDasharray="1 3" strokeWidth="1.300" />
          </svg>
        </SearchBox>
        <AppRow>
          <App24>
            <svg width="24" height="24"><rect x="0" y="7" width="17" height="16" fill="#6c6c6c" /><rect x="6" y="1" width="18" height="16" fill="#eee" /><rect x="6" y="7" width="11" height="10" fill="#b0b0b0" /></svg>
          </App24>
          <App24>
            <svg width="24" height="24">
              <defs>
                <linearGradient id="cpa" x2="0" y2="1"><stop stopColor="#1d7fe0" /><stop offset="0.500" stopColor="#2fb5c8" /><stop offset="1" stopColor="#f0d03c" /></linearGradient>
                <linearGradient id="cpb" x2="0" y2="1"><stop stopColor="#a45ae8" /><stop offset="0.500" stopColor="#ea5a8c" /><stop offset="1" stopColor="#f89a4a" /></linearGradient>
              </defs>
              <path d="M8 1.500H15Q17 1.500 18 5L18.500 7H15Q12.500 7 11.500 10L9.500 17H4Q1 17 1 13Q2 2 8 1.500Z" fill="url(#cpa)" />
              <path d="M16 22.500H9Q7 22.500 6 19L5.500 17H9Q11.500 17 12.500 14L14.500 7H20Q23 7 23 11Q22 22 16 22.500Z" fill="url(#cpb)" />
              <path d="M11.500 10L9.500 17Q12 16.500 12.500 14L14.500 7Q12.300 7.500 11.500 10Z" fill="#251e26" />
            </svg>
          </App24>
          <App24>
            <svg width="24" height="25">
              <path d="M7 7V2Q7 1 8 1H16Q17 1 17 2V7" fill="none" stroke="#31aef0" strokeWidth="2" />
              <rect x="0.5" y="6" width="23" height="18" rx="3" fill="#f3f3f3" />
              <path d="M7 10H11.500V14.500H7Z" fill="#f25022" /><path d="M12.500 10H17V14.500H12.500Z" fill="#7fba00" /><path d="M7 15.500H11.500V20H7Z" fill="#00a4ef" /><path d="M12.500 15.500H17V20H12.500Z" fill="#ffb900" />
            </svg>
          </App24>
          <App24>
            <svg width="24" height="18"><rect width="24" height="18" rx="4" fill="#ff0033" /><path d="M9.500 5L16 9L9.500 13Z" fill="#fff" /></svg>
          </App24>
          <App24>
            <svg width="26" height="24"><path d="M1 2Q1 1 2 1H9L12 4H1Z" fill="#d99207" /><rect x="1" y="4" width="24" height="18" rx="1" fill="#fdc83c" /><path d="M5 23V18Q5 16 7 16H19Q21 16 21 18V23Z" fill="#1579cf" /></svg>
            <Underline $w={6} $c="#a0a0a0" />
          </App24>
          <App24>
            <svg width="25" height="25" fill="none" stroke="#25d366" strokeWidth="2.400">
              <path d="M2 23L3.600 17.500A10.200 10.200 0 1 1 7.500 21.400Z" />
              <path d="M8 7.500Q9 6.500 10 8L10.800 10L9.800 11.500Q11 14 13.800 15.200L15.200 14L17.500 15.200Q17.500 17.500 15 17.700Q9 17 7.300 10.500Q7.200 8.500 8 7.500Z" fill="#25d366" stroke="none" />
            </svg>
            <Badge>9</Badge>
          </App24>
          <App24>
            <svg width="24" height="24">
              <defs><linearGradient id="edge"><stop stopColor="#2aa9e8" /><stop offset="1" stopColor="#5fe06a" /></linearGradient></defs>
              <circle cx="12" cy="12" r="11.500" fill="#0f6cc4" />
              <path d="M0.500 11Q2 0.500 12 0.500Q23.500 1 23.500 10Q23 15 18 15.500Q14 15.500 14 14Q16 12 14 9.500Q11 6.500 6 8Q2 9 0.500 11Z" fill="url(#edge)" />
              <path d="M14 14Q14 16 18 15.500Q22 15 23.500 11V16L22 18Q18 21 13 19Q9 17 10 12.500Q11 10 14 9.500Q16 12 14 14Z" fill="#271f22" />
              <path d="M9 11Q7 19 14 20.500Q19 21 22 18Q18 25 11 23Q5 20 7 14Z" fill="#0f59a8" />
            </svg>
          </App24>
          <App24>
            <svg width="24" height="24"><ellipse cx="12" cy="12" rx="9" ry="10" fill="none" stroke="#ee1f2c" strokeWidth="4" /><ellipse cx="12" cy="12" rx="6" ry="9" fill="none" stroke="#b00f1b" strokeWidth="1.500" /></svg>
          </App24>
          <App24>
            <svg width="24" height="24"><path d="M17.500 0L24 3V21L17.500 24L6 13.500L2.500 16.500L0.500 15.500V8.500L2.500 7.500L6 10.500ZM18 7L11 12L18 17Z" fill="#1f97e0" fillRule="evenodd" /><path d="M17.500 0L24 3V21L17.500 24Z" fill="#3bb0f4" /></svg>
          </App24>
          <App24 $active>
            <svg width="24" height="24">
              <rect width="24" height="24" fill="#32108a" />
              <text x="12" y="10" fontSize="10" fontWeight="700" textAnchor="middle" fill="#e8e8e8">REW</text>
              <path d="M1 23V17L3 20L5 12L7 19L10 21L13 13L15 21L20 18L23 22V23Z" fill="#29c4c8" />
              <path d="M4 23L5.500 16L7 23ZM12 23L13.500 16L15 23Z" fill="#f2d531" />
              <path d="M3 23H22V21.500H3Z" fill="#7ad63d" />
            </svg>
            <Underline $w={16} $c="#4cc2ff" />
          </App24>
        </AppRow>
        <Tray>
          <svg width="10" height="6" fill="none" stroke="#eee" strokeWidth="1.500"><path d="M0.500 5.500L5 1L9.500 5.500" /></svg>
          <Spacer $w={22} />
          <svg width="11" height="17" fill="none" stroke="#7cd0e8" strokeWidth="1.200"><rect x="3" y="0.700" width="5" height="10" rx="2.500" /><path d="M0.700 8Q1 13 5.500 13Q10 13 10.300 8M5.500 13V17" /></svg>
          <Spacer $w={18} />
          <svg width="17" height="13" fill="none" stroke="#eee" strokeWidth="1.500"><path d="M1 5Q8.500 -2.500 16 5M3.500 7.500Q8.500 2.500 13.500 7.500M6 10Q8.500 7.500 11 10" /><circle cx="8.500" cy="11.500" r="1" fill="#eee" stroke="none" /></svg>
          <Spacer $w={7} />
          <svg width="17" height="14" fill="none" stroke="#eee" strokeWidth="1.200"><path d="M1 5H3.500L7.500 1.500V12.500L3.500 9H1ZM10 4.500Q11.500 7 10 9.500M12 2.700Q14.500 7 12 11.300M14 1Q18 7 14 13" /></svg>
          <Spacer $w={7} />
          <svg width="17" height="11" fill="none" stroke="#eee" strokeWidth="1.300"><rect x="0.700" y="0.700" width="13" height="9.500" rx="2" /><rect x="3" y="3" width="5" height="5" fill="#eee" stroke="none" /><path d="M15.500 4V7" strokeWidth="2" /></svg>
          <Clock>1:27 PM<br />7/15/2025</Clock>
          <svg width="16" height="17"><path d="M2 12V7Q2 2 7 2Q11 2 12 6V12L13 13.500H1ZM5 14.500H9Q9 16.500 7 16.500T5 14.500Z" fill="#eee" /><path d="M9 1H14L10 6H14" fill="none" stroke="#202020" strokeWidth="3" /><path d="M9.500 1.500H14L10 6H14" fill="none" stroke="#eee" /><path d="M5 7H9L5 11H9" fill="none" stroke="#222" /></svg>
        </Tray>
      </Taskbar>

      <Collapse>
        Collapse
        <svg width="12" height="10" fill="none" stroke="#eee" strokeWidth="1.200"><path d="M5.500 0.500L1 5L5.500 9.500M11 0.500L6.500 5L11 9.500" /></svg>
      </Collapse>

      <Dialog>
        <DialogTitle>Make a measurement<Cross c="#aaa" /></DialogTitle>
        <DialogBody>
          <LeftCol>
            <Row $h={33} $mt={12}>
              <Label $w={39} $pt={0}>Type:</Label>
              <Segments $w={280}><Segment $on>SPL</Segment><Segment>Impedance</Segment></Segments>
            </Row>
            <NameArea>
              <div>
                <Row $h={30}><Label $w={39}>Name:</Label><Field $w={280} $h={30} $bg="#272727" $edge="#454545" $r={0} /></Row>
                <Row $h={18} $mt={17} $pl={39}>Will appear as:</Row>
                <Row $h={30} $mt={-2} $pl={39}>
                  <Field $w={280} $h={30} $bg="#1e1e1e" $edge="#3a3a3a" $r={0} $c="#e4e4e4">R Jul 15</Field>
                </Row>
              </div>
              <OptionList>
                <Row $h={24} $gap={7}><Radio /><OptionText $w={95}>Add number</OptionText><ListIcon /></Row>
                <Row $h={24} $gap={7}><Radio $on /><OptionText $w={95}>Add date/time</OptionText><ListIcon /></Row>
                <Row $h={22} $gap={7}><Radio />Use as entered</Row>
                <Row $h={22} $gap={7} $pl={1}><CheckBox />Prefix with output</Row>
              </OptionList>
            </NameArea>
            <Row $h={87} $mt={28} $top>
              <Label $w={39} $pt={7}>Notes:</Label>
              <Field $w={280} $h={87} $bg="#272727" $edge="#6e6e6e" $r={0} />
            </Row>
            <Row $h={20} $mt={1} $pl={42} $gap={6}><CheckBox on={false} dim />Keep for next measurement</Row>
            <Row $h={18} $mt={13} $pl={39}><Centered $w={133}>Start Freq</Centered><Centered $w={133} $ml={14}>End Freq</Centered></Row>
            <Row $h={22} $mt={0}>
              <Label $w={39}>Range:</Label>
              <Field $w={133} $h={22} $right>0<SpinArrows /></Field>
              <Spacer $w={14} />
              <Field $w={133} $h={22} $right>20,000<SpinArrows /></Field>
            </Row>
            <Row $h={87} $mt={14}>
              <Label $w={39}>Level:</Label>
              <Field $w={280} $h={87} $right><BigLevel>-6.00 dBFS</BigLevel></Field>
            </Row>
            <Row $h={24} $mt={14} $pl={42} $gap={6}><CheckBox mark="#a8a8a8" /><Dim>Abort if heavy input clipping occurs</Dim></Row>
            <Row $h={24} $pl={42} $gap={6}>
              <CheckBox on={false} /><Dim><Label $w={187} $pt={0} as="div">Abort above SPL limit</Label></Dim>
              <Field $w={64} $h={22} $right>100<SpinArrows /></Field>
              <Dim>dB</Dim>
            </Row>
            <Row $h={18} $mt={12} $pl={39}>Remaining sweeps: 0 &nbsp; time: 1s</Row>
            <Progress>95%</Progress>
            <MeterRow>
              <Label $w={39} $pt={56}>Input:</Label>
              <MeterFrame><MeterInner><InputMeter /></MeterInner></MeterFrame>
              <Headroom>Headroom<HeadroomValue>84.3 dB</HeadroomValue></Headroom>
            </MeterRow>
          </LeftCol>

          <RightCol>
            <Row $h={33} $mt={12}>
              <Label $w={68} $pt={0}>Method:</Label>
              <Segments $w={268}><Segment $on>Sweep</Segment><Segment>Noise</Segment></Segments>
            </Row>
            <Row $h={18} $mt={14} $pl={68}><Centered $w={127}>Length</Centered><Centered $w={127} $ml={14}>Repetitions</Centered></Row>
            <Row $h={22}>
              <Label $w={68}>Settings:</Label>
              <Combo w={127} text="256k" right />
              <Spacer $w={14} />
              <Combo w={127} text="1" right />
              <Spacer $w={7} />
              <Label $w={30}>5.5 s</Label>
            </Row>
            <Row $h={22} $mt={14}><Label $w={68}>Timing:</Label><Combo w={268} text="No timing reference" /></Row>
            <Row $h={22} $mt={3} $pl={68}><Combo w={268} text="Set t=0 at IR peak" /></Row>
            <Row $h={33} $mt={126} $pl={68}>
              <Segments $w={268}><Segment $on>From REW</Segment><Segment>From file</Segment></Segments>
            </Row>
            <Row $h={22} $mt={14} $pl={68}><Combo w={127} /></Row>
            <Row $h={22} $mt={7} $pl={68}><Combo w={268} text="ent" pl={94} /></Row>
            <Row $h={22} $mt={3} $pl={68} $gap={4}><Field $w={252} $h={22} $r={0} $bg="#1f1f1f" /><Tri d="d" /></Row>
            <Row $h={22} $mt={13} $pl={68} $gap={7}><Combo w={268} /><Combo w={72} text="R" /></Row>
            <Row $h={22} $mt={32} $gap={0}>
              <Label $w={68}>Options:</Label>
              <Field $w={252} $h={22} $r={0} $bg="#1f1f1f">Play dither before sweep</Field>
              <Spacer $w={4} />
              <Tri d="d" />
            </Row>
            <Row $h={20} $mt={78} $pl={71} $gap={6}><CheckBox mark="#a8a8a8" /><Dim>Capture noise floor</Dim></Row>
            <Row $h={38} $mt={5}>
              <Label $w={68} $pt={3}>Input:</Label>
              <Label $w={275} $pt={1}><Lines as="div">{"LINE_IN (Master Volume) R\non Line (2- AudioBox USB 96)"}</Lines></Label>
              <Button $w={46} $h={38} $kind="off">
                <svg width="30" height="30" fill="none" stroke="#8a8a8a" strokeWidth="2">
                  <path d="M4 5V1H28V29H4V25M4 12V18" fill="#555" />
                  <path d="M0 9H10M6.500 5L10.500 9L6.500 13M0 21H10M6.500 17L10.500 21L6.500 25" />
                </svg>
              </Button>
            </Row>
            <Row $h={22} $mt={8} $pl={68}><Button $w={268} $h={22} $kind="off">Calibration files...</Button></Row>
            <Row $h={31} $mt={14}>
              <Button $w={118} $h={31} $kind="off" $big>Check levels</Button>
              <Spacer $w={30} />
              <Button $w={118} $h={31} $kind="off" $big>Start</Button>
              <Spacer $w={31} />
              <Button $w={118} $h={31} $big>Cancel</Button>
            </Row>
          </RightCol>
        </DialogBody>
      </Dialog>

      <Popup>
        <PopupTitle>Very low signal level on measured<Cross c="#fff" /></PopupTitle>
        <PopupBody>
          <svg width="30" height="28">
            <path d="M15 1L29.500 27H0.500Z" fill="#f0a732" stroke="#f0a732" strokeLinejoin="round" />
            <rect x="13" y="7" width="4" height="11" rx="1.800" fill="#1e1e1e" />
            <circle cx="15" cy="22" r="2.200" fill="#1e1e1e" />
          </svg>
          <Message>
            <Para $ls={-0.35}>The highest level in the measured input is just 33 dB SPL (-87 dBFS)</Para>
            <Para>{"This is much lower than it should be. Check the input channel\nselection, connections, input volume and output volume/mute."}</Para>
            <Para $ls={-0.31}>The highest level should ideally be above -35 dBFS</Para>
          </Message>
        </PopupBody>
        <PopupActions>
          <Button $w={72} $h={22} $kind="primary">OK</Button>
          <Button $w={72} $h={22}>Cancel</Button>
        </PopupActions>
      </Popup>
    </Screen>
  );
}
